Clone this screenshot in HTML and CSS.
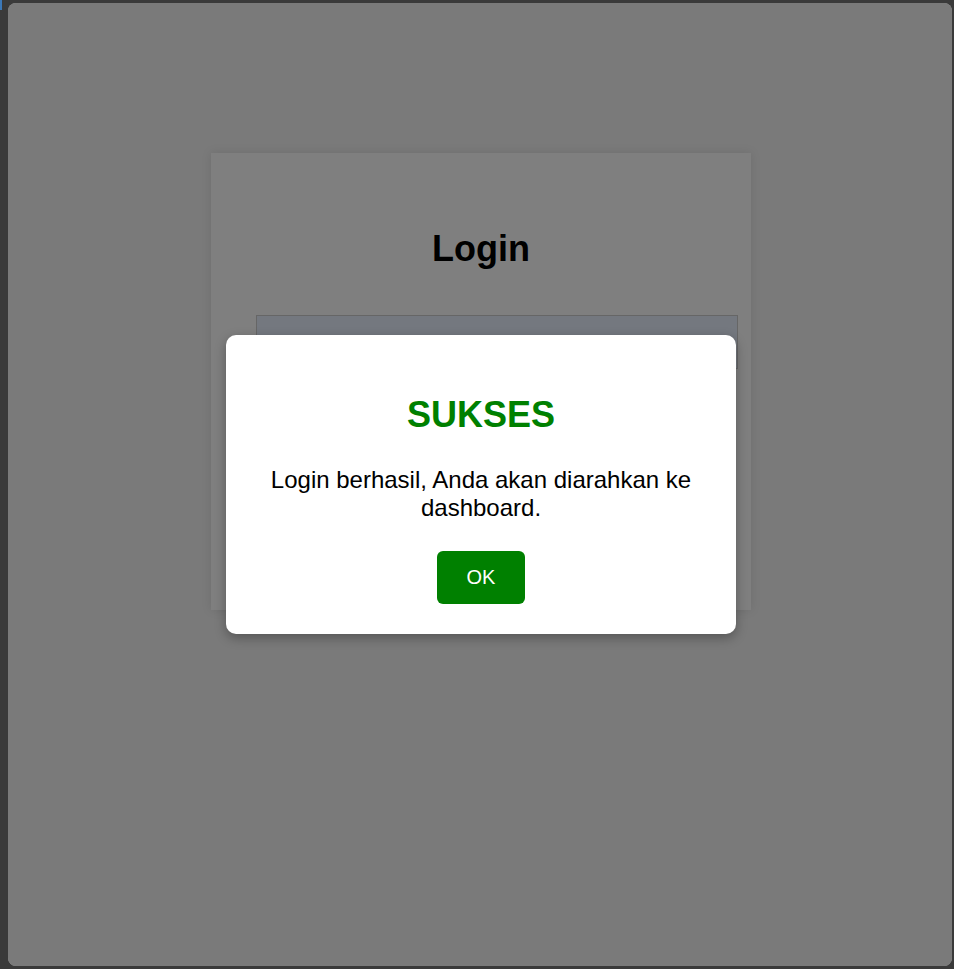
FILE: index.html
```html
<!DOCTYPE html>
<html lang="id">
<head>
<meta charset="utf-8">
<title>Login</title>
<link rel="stylesheet" href="styles.css">
</head>
<body>
<span class="corner-tab"></span>
<div class="window">
  <main class="page">
    <form class="card">
      <h2 class="card-title">Login</h2>
      <input class="field" type="text" value="admin@kampus.ac.id">
      <input class="field field-pass" type="password" value="password">
      <button class="btn-login" type="button">Login</button>
      <p class="card-note">Belum punya akun? Daftar di sini</p>
    </form>
  </main>
  <div class="overlay">
    <div class="modal">
      <h2 class="modal-title">SUKSES</h2>
      <p class="modal-text">Login berhasil, Anda akan diarahkan ke dashboard.</p>
      <button class="btn-ok" type="button">OK</button>
    </div>
  </div>
</div>
</body>
</html>
```

FILE: styles.css
```css
* { box-sizing: border-box; }
html, body { margin: 0; height: 100%; }
body {
  background: #3a3a3a;
  padding: 3px 2px 3px 8px;
  font-family: "Liberation Sans", Arial, sans-serif;
}
.corner-tab {
  position: absolute;
  left: 0;
  top: 0;
  width: 2px;
  height: 10px;
  background: #3b78b8;
}
.window {
  position: relative;
  height: 963px;
  border-radius: 8px;
  overflow: hidden;
  background: #f4f4f4;
}
.page {
  display: flex;
  justify-content: center;
  padding: 150px 0 0 2px;
}
.card {
  width: 540px;
  height: 457px;
  padding: 45px;
  background: #fff;
  box-shadow: 0 0 10px rgba(0,0,0,0.1);
  display: flex;
  flex-direction: column;
  align-items: flex-start;
}
.card-title {
  align-self: stretch;
  text-align: center;
  font-size: 36px;
  margin: 30px 0 45px;
  color: #000;
}
.field {
  box-sizing: content-box;
  width: 100%;
  height: 22px;
  padding: 15px;
  border: 1px solid #ccc;
  background: #e8f0fe;
  font-family: inherit;
  font-size: 18px;
  color: #000;
  flex: none;
}
.field-pass { display: none; }
.btn-login {
  box-sizing: content-box;
  margin-top: 32px;
  width: 100%;
  height: 24px;
  padding: 15px;
  border: 0;
  border-radius: 5px;
  background: #000;
  color: #fff;
  font-family: inherit;
  font-size: 20px;
  flex: none;
}
.card-note {
  align-self: stretch;
  text-align: center;
  font-size: 16px;
  margin: 20px 0 0;
}
.overlay {
  position: absolute;
  inset: 0;
  padding-left: 2px;
  background: rgba(0,0,0,0.5);
  display: flex;
  align-items: center;
  justify-content: center;
}
.modal {
  width: 510px;
  padding: 30px;
  background: #fff;
  border-radius: 10px;
  box-shadow: 0 4px 12px rgba(0,0,0,0.3);
  text-align: center;
}
.modal-title {
  color: #008000;
  font-size: 36px;
  line-height: 41px;
  margin: 29px 0 31px;
}
.modal-text {
  font-size: 24px;
  line-height: 28px;
  margin: 0 0 29px;
  color: #000;
}
.btn-ok {
  padding: 15px 30px;
  border: 0;
  border-radius: 6px;
  background: #008000;
  color: #fff;
  font-family: inherit;
  font-size: 20px;
  line-height: 23px;
}
```
